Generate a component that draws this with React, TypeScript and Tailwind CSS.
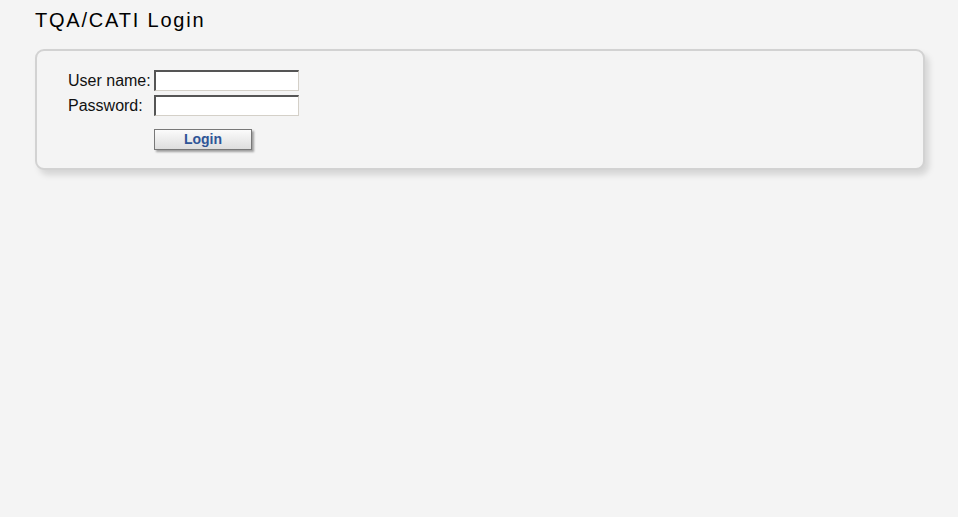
import React from "react";

export default function App() {
  return (
    <div className="min-h-[517px] w-full bg-[#f4f4f4] pl-[35px] pr-[33px] pt-[9px]" style={{ fontFamily: '"Liberation Sans", Arial, sans-serif' }}>
      <h1 className="text-[20px] leading-[22px] tracking-[1.8px] text-black font-normal">TQA/CATI Login</h1>
      <div className="mt-[18px] rounded-[9px] border-2 border-[#d2d2d2] bg-[#f4f4f4] shadow-[4px_5px_6px_rgba(0,0,0,0.13)] pl-[31px] pt-[19px] pb-[17px]">
        <div className="flex items-center h-[21px]">
          <label className="w-[86px] text-[16px] leading-[21px] text-[#111]">User name:</label>
          <input type="text" className="w-[145px] h-[21px] bg-white border-t-2 border-l-2 border-b border-r border-t-[#555] border-l-[#555] border-b-[#d4d0c8] border-r-[#d4d0c8] outline-none" />
        </div>
        <div className="flex items-center h-[21px] mt-[4px]">
          <label className="w-[86px] text-[16px] leading-[21px] text-[#111]">Password:</label>
          <input type="password" className="w-[145px] h-[21px] bg-white border-t-2 border-l-2 border-b border-r border-t-[#555] border-l-[#555] border-b-[#d4d0c8] border-r-[#d4d0c8] outline-none" />
        </div>
        <div className="mt-[11px] pl-[86px]">
          <button className="w-[98px] h-[21px] border border-[#787878] bg-gradient-to-b from-[#fbfbfb] to-[#dedede] shadow-[2px_2px_2px_rgba(0,0,0,0.35)] text-[14px] font-bold text-[#2f5597] leading-[19px]">Login</button>
        </div>
      </div>
    </div>
  );
}
